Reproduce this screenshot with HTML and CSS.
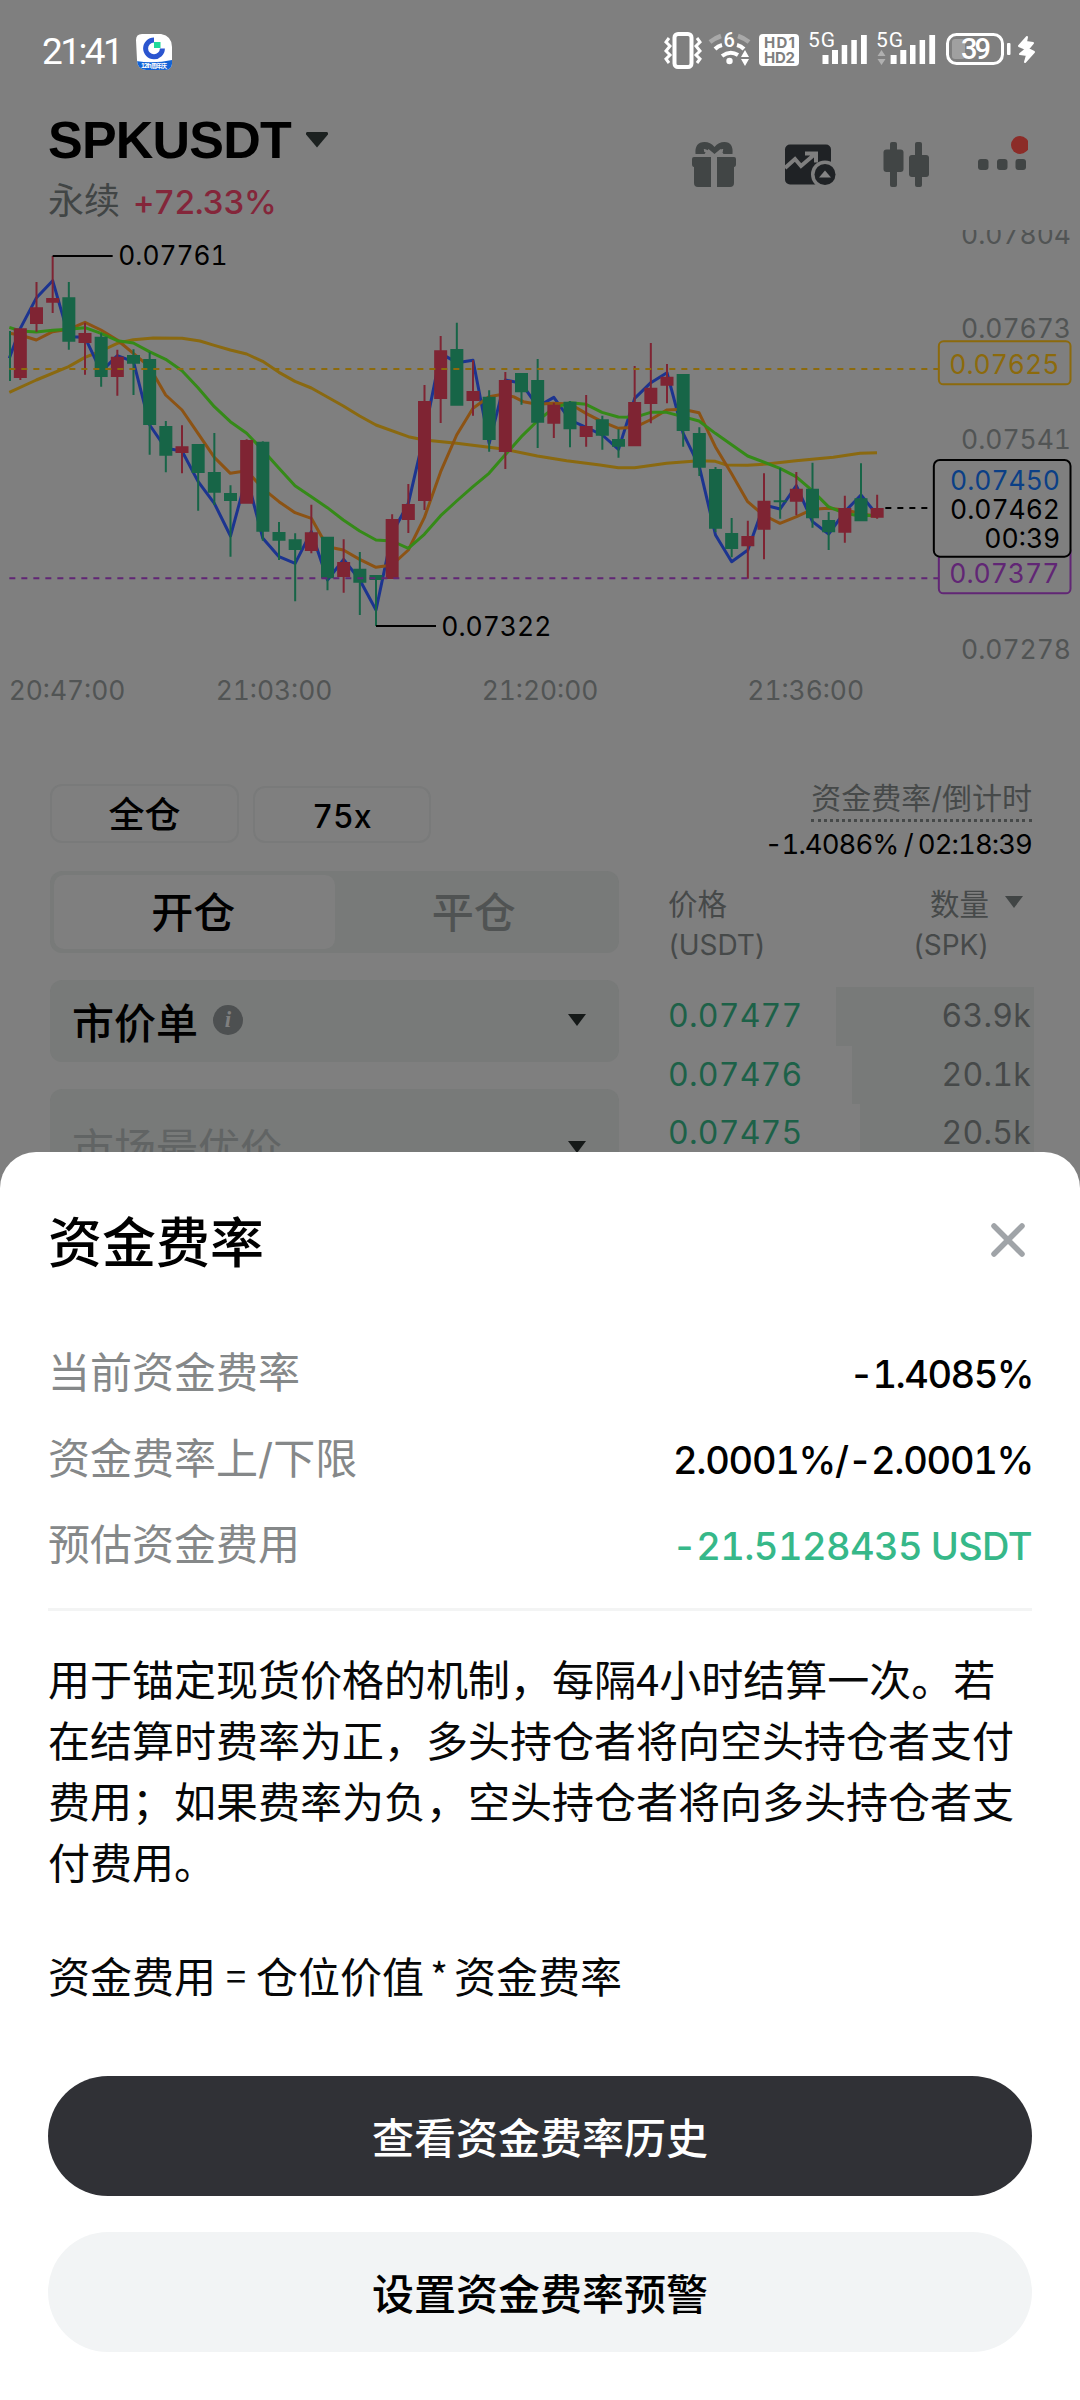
FILE: index.html
```html
<!DOCTYPE html>
<html lang="zh-CN">
<head>
<meta charset="utf-8">
<title>SPKUSDT 永续</title>
<link rel="stylesheet" href="styles.css">
</head>
<body>
<div class="screen">
  <header class="status">
    <span class="clock">21:41</span>
    <svg class="app-badge" width="36" height="37" viewBox="0 0 36 37">
      <defs><clipPath id="badge"><path d="M6 1H25Q36 3 36 14V31Q35 37 29 37H10Q1 36 1 27L0 7Q0 1 6 1Z"/></clipPath></defs>
      <g clip-path="url(#badge)"><rect width="36" height="37" fill="#fff"/><path d="M0 28Q18 31 36 27V37H0Z" fill="#1263d6"/></g>
      <path d="M18 7A8.4 8.4 0 1 0 26.400 15.500" fill="none" stroke="#2b55cf" stroke-width="5"/>
      <rect x="18" y="9" width="6.500" height="6" fill="#20d99a"/>
      <text x="5" y="34.500" font-size="6" font-weight="700" fill="#fff" textLength="26">12th 周年庆</text>
    </svg>
    <svg class="status-icons" width="376" height="44" viewBox="662 28 376 44" fill="#fff">
      <rect x="674.500" y="34" width="17" height="33" rx="3.500" fill="none" stroke="#fff" stroke-width="4"/>
      <path d="M669 38l-3 4 4 4-4 5 4 4-4 4 3 4M697 38l3 4-4 4 4 5-4 4 4 4-3 4" fill="none" stroke="#fff" stroke-width="3"/>
      <path d="M710 42Q715 38 721 36M738 36Q744 38 749 42" fill="none" stroke="#a9a9a9" stroke-width="4.500"/>
      <path d="M715 49Q718 46 722 45M737 45Q741 46 744 49M722 56Q730 50 738 55" fill="none" stroke="#fff" stroke-width="4"/>
      <circle cx="729.500" cy="61" r="3.200"/>
      <path d="M741 57l4-7 4 7zM741 59h8l-4 7z"/>
      <text class="wifi-gen" x="723.500" y="46.500">6</text>
      <rect x="759" y="34" width="40" height="32" rx="4"/>
      <text class="hd" x="764" y="48" textLength="31">HD1</text>
      <text class="hd" x="764" y="62.500" textLength="31">HD2</text>
      <text class="net" x="808" y="47" textLength="27">5G</text>
      <text class="net" x="876" y="47" textLength="27">5G</text>
      <path d="M822.500 55h6v9h-6zM832 50h6v14h-6zM841.700 45h5.500v19h-5.500zM851.300 40h5.500v24h-5.500zM861 35h5.800v29h-5.800zM890.600 55h6v9h-6zM900.300 50h6v14h-6zM910 45h5.500v19h-5.500zM919.600 40h5.500v24h-5.500zM929.300 35h5.800v29h-5.800z"/>
      <path d="M877.500 56l4-6 4 6zM877.500 59h8l-4 6z" fill="#b0b0b0"/>
      <rect x="952" y="39" width="13" height="20" rx="3" fill="#a0a0a0"/>
      <rect x="947.500" y="34.500" width="55" height="29" rx="9" fill="none" stroke="#fff" stroke-width="3"/>
      <rect x="1007" y="43" width="3.500" height="12" rx="1"/>
      <text class="charge" x="961" y="59" textLength="30">39</text>
      <path d="M1027 37L1019 46l7 3-6 5 7 1-2 7 9-10-6-3 5-6-7-1z" stroke="#fff" stroke-width="2" stroke-linejoin="round"/>
    </svg>
  </header>

  <section class="market">
    <div class="pair">
      <div class="pair-name"><h1>SPKUSDT</h1><svg width="22" height="16" viewBox="0 0 22 16"><path d="M1 0H21Q23 1 21.500 3L11 15.500.500 3Q-1 1 1 0Z" fill="#1c2120"/></svg></div>
      <div class="pair-sub"><span class="kind">永续</span><span class="change">+72.33%</span></div>
    </div>
    <nav class="tools">
      <svg width="338" height="54" viewBox="690 135 338 54" fill="#414545">
        <path d="M694 157h17v30h-13q-4 0-4-4v-16q-2 0-2-3v-5q0-2 2-2zM717 157h17q2 0 2 2v5q0 3-2 3v16q0 4-4 4h-13z"/>
        <path d="M695.500 154q-1-12 9-12q6 0 10 5q4-5 10-5q9 0 8 12h-9l-3-5-6 5-6-5-4 5z"/>
        <path d="M704 150.500q3-.5 5 5M723 150.500q-3-.5-5 5" fill="none" stroke="#7f7f7f" stroke-width="3"/>
        <rect x="785" y="144.500" width="46" height="40" rx="5" fill="#1f2225"/>
        <path d="M785 168l10-9 6 7 14-12M805 153.500h11v9" fill="none" stroke="#7f7f7f" stroke-width="4"/>
        <circle cx="825" cy="174.500" r="14" fill="#7f7f7f"/><circle cx="825" cy="174.500" r="10.500" fill="#1f2225"/>
        <path d="M819 177.500l6-7 6 7z" fill="#858585"/>
        <rect x="883.500" y="149.500" width="20" height="22.500" rx="3"/><rect x="890" y="142" width="7" height="45" rx="2"/>
        <rect x="909" y="155" width="20" height="22" rx="3"/><rect x="915" y="142" width="7" height="45" rx="2"/>
        <rect x="978" y="159" width="10.500" height="11" rx="3"/><rect x="997" y="159" width="10.500" height="11" rx="3"/><rect x="1015.500" y="159" width="10.500" height="11" rx="3"/>
        <circle cx="1020" cy="145" r="9" fill="#8c2c28"/>
      </svg>
    </nav>
  </section>

  <!-- Chart units are thirds of a CSS pixel -->
  <svg class="chart" width="1080" height="480" viewBox="0 30 3240 1440">
    <g id="averages"></g>
    <g id="candles"></g>
    <path d="M28 447H2815" class="dash" stroke="#8c6a0c"/>
    <path d="M28 1075H2815" class="dash" stroke="#612675"/>
    <path d="M2656 864H2785" class="dash" stroke="#000"/>
    <path d="M158 108H338M1128 1218H1308" stroke="#000" stroke-width="6"/>
    <text x="355" y="135" textLength="328" lengthAdjust="spacingAndGlyphs">0.07761</text>
    <text x="1324" y="1247" textLength="330" lengthAdjust="spacingAndGlyphs">0.07322</text>
    <g class="axis">
      <text x="2883" y="72" textLength="330" lengthAdjust="spacingAndGlyphs">0.07804</text>
      <text x="2883" y="354" textLength="330" lengthAdjust="spacingAndGlyphs">0.07673</text>
      <text x="2883" y="687" textLength="330" lengthAdjust="spacingAndGlyphs">0.07541</text>
      <text x="2883" y="1318" textLength="330" lengthAdjust="spacingAndGlyphs">0.07278</text>
      <text x="26" y="1440" textLength="350" lengthAdjust="spacingAndGlyphs">20:47:00</text>
      <text x="647" y="1440" textLength="350" lengthAdjust="spacingAndGlyphs">21:03:00</text>
      <text x="1445" y="1440" textLength="350" lengthAdjust="spacingAndGlyphs">21:20:00</text>
      <text x="2242" y="1440" textLength="350" lengthAdjust="spacingAndGlyphs">21:36:00</text>
    </g>
    <g fill="#7f7f7f" stroke-width="6">
      <rect x="2816.500" y="364" width="395" height="129" rx="14" stroke="#8c6a0c"/>
      <rect x="2816.500" y="980" width="395" height="140" rx="14" stroke="#612675"/>
      <rect x="2801.500" y="720" width="410" height="290" rx="18" stroke="#000"/>
    </g>
    <text x="2848" y="462" textLength="330" lengthAdjust="spacingAndGlyphs" fill="#8c6a0c">0.07625</text>
    <text x="2848" y="1089" textLength="330" lengthAdjust="spacingAndGlyphs" fill="#612675">0.07377</text>
    <text x="2850" y="810" textLength="330" lengthAdjust="spacingAndGlyphs" fill="#0b3f86">0.07450</text>
    <text x="2850" y="897" textLength="330" lengthAdjust="spacingAndGlyphs">0.07462</text>
    <text x="2953" y="984" textLength="228" lengthAdjust="spacingAndGlyphs">00:39</text>
  </svg>

  <section class="trade">
    <div class="form">
      <div class="chips"><span class="chip cross">全仓</span><span class="chip lever">75x</span></div>
      <div class="segment"><span class="seg active">开仓</span><span class="seg">平仓</span></div>
      <div class="field"><span>市价单</span><i class="info">i</i><b class="caret"></b></div>
      <div class="field price"><span>市场最优价</span><b class="caret"></b></div>
    </div>
    <div class="book">
      <div class="funding">资金费率/倒计时</div>
      <div class="countdown">-1.4086% / 02:18:39</div>
      <div class="book-head"><div>价格<br><small>(USDT)</small></div><div class="qty-head"><div>数量<br><small>(SPK)</small></div><b class="caret wide"></b></div></div>
      <div class="level"><span>0.07477</span><em style="width:198px">63.9k</em></div>
      <div class="level"><span>0.07476</span><em style="width:182px">20.1k</em></div>
      <div class="level"><span>0.07475</span><em style="width:174px">20.5k</em></div>
    </div>
  </section>

  <section class="sheet">
    <div class="sheet-head"><h2>资金费率</h2>
      <svg width="34" height="34" viewBox="0 0 34 34"><path d="M3 3L31 31M31 3L3 31" stroke="#a0a4a8" stroke-width="5.500" stroke-linecap="round"/></svg>
    </div>
    <dl class="rates">
      <div><dt>当前资金费率</dt><dd>-1.4085%</dd></div>
      <div><dt>资金费率上/下限</dt><dd class="limit">2.0001%/-2.0001%</dd></div>
      <div><dt>预估资金费用</dt><dd class="fee">-21.5128435 USDT</dd></div>
    </dl>
    <p class="explain">用于锚定现货价格的机制，每隔4小时结算一次。若在结算时费率为正，多头持仓者将向空头持仓者支付费用；如果费率为负，空头持仓者将向多头持仓者支付费用。</p>
    <p class="formula">资金费用<span class="eq">=</span>仓位价值<span class="mul">*</span>资金费率</p>
    <button class="btn dark">查看资金费率历史</button>
    <button class="btn light">设置资金费率预警</button>
  </section>
</div>
<script src="chart.js"></script>
</body>
</html>
```
FILE: styles.css
```css
* { box-sizing: border-box; margin: 0; padding: 0; }
body { background: #7f7f7f; }
.screen {
  width: 1080px; height: 2400px; overflow: hidden; background: #7f7f7f;
  display: flex; flex-direction: column;
  font-family: Inter, "Noto Sans CJK SC", sans-serif;
  font-variant-numeric: tabular-nums; color: #000;
}
.status { height: 100px; display: flex; align-items: flex-start; padding: 29px 42px 0 42px; color: #fff; }
.clock { font: 400 37px/46px Roboto, sans-serif; width: 94px; letter-spacing: -2.6px; white-space: nowrap; }
.app-badge { margin-top: 4px; }
.status-icons { margin: -1px 0 0 auto; }
.wifi-gen { font: 500 20px Roboto, sans-serif; }
.hd { font: 700 15px Inter, sans-serif; fill: #7f7f7f; }
.net { font: 400 21px Roboto, sans-serif; }
.charge { font: 500 29px Roboto, sans-serif; }

.market { height: 130px; display: flex; justify-content: space-between; align-items: flex-start; padding: 0 52px 0 48px; }
.pair-name { display: flex; align-items: center; gap: 15px; height: 80px; }
h1 { font: 700 52px/80px "Liberation Sans", sans-serif; letter-spacing: -0.8px; }
.pair-sub { display: flex; gap: 13px; line-height: 42px; align-items: baseline; }
.kind { font-size: 36px; color: #414545; }
.change { font-size: 33px; font-weight: 500; color: #84263a; letter-spacing: -0.8px; }
.tools { padding-top: 35px; }
.tools svg, .chart { display: block; }
.chart { flex: none; }
.chart text { font-family: Inter, sans-serif; font-size: 79px; }
.axis { fill: #515454; }
.dash { stroke-width: 6; stroke-dasharray: 18 18; }

.trade { flex: none; height: 442px; padding: 74px 48px 0 50px; display: flex; justify-content: space-between; overflow: hidden; }
.form { width: 569px; }
.chips { display: flex; gap: 14px; height: 59px; }
.chip { border: 2px solid #797a7a; border-radius: 12px; display: flex; align-items: center; justify-content: center; font-weight: 500; }
.cross { width: 189px; font-size: 36px; padding-bottom: 3px; }
.lever { width: 178px; font-size: 32px; margin-top: 2px; padding-top: 3px; }
.segment { margin-top: 28px; height: 82px; padding: 4px; background: #787a79; border-radius: 12px; display: flex; }
.seg { flex: 1; display: flex; align-items: center; justify-content: center; font-size: 42px; font-weight: 500; border-radius: 10px; color: #505353; padding: 0 2px 5px 0; }
.seg.active { background: #7f7f7f; color: #000; }
.field { margin-top: 27px; height: 82px; padding: 0 33px 2px 22px; background: #787a79; border-radius: 12px; display: flex; align-items: center; font-size: 42px; font-weight: 500; }
.field.price { height: 118px; color: #616464; font-weight: 400; }
.field.price span { margin-top: -4px; }
.info { width: 30px; height: 30px; margin-left: 15px; border-radius: 50%; background: #4d5051; color: #7f7f7f; font: italic 700 23px/29px "Liberation Serif", serif; text-align: center; }
.caret { margin-left: auto; width: 18px; height: 12px; background: #151918; clip-path: polygon(0 0, 100% 0, 50% 100%); }

.book { width: 364px; color: #464949; text-align: right; }
.funding { display: inline-block; height: 38px; font-size: 30px; line-height: 28px; border-bottom: 3px dotted #464949; white-space: nowrap; }
.countdown { color: #000; font-size: 27.500px; line-height: 36px; margin-top: 4px; white-space: nowrap; letter-spacing: -0.95px; word-spacing: -1.200px; }
.book-head { display: flex; justify-content: space-between; font-size: 29.500px; line-height: 40px; margin-top: 22px; text-align: left; height: 103px; }
.book-head small { font-size: 28px; letter-spacing: -0.1px; }
.qty-head { display: flex; gap: 16px; text-align: right; padding-right: 9px; }
.caret.wide { margin-top: 12px; background: #414545; }
.level { display: flex; justify-content: space-between; font-size: 32px; line-height: 58px; height: 58.600px; margin-right: -2px; }
.level span { color: #1d6148; letter-spacing: 0.2px; }
.level em { font-style: normal; background: #787a79; padding-right: 3px; letter-spacing: 0.2px; }

.sheet { flex: none; height: 1248px; background: #fff; border-radius: 36px 36px 0 0; padding: 0 48px; }
.sheet-head { height: 176px; display: flex; align-items: center; justify-content: space-between; padding-right: 7px; }
h2 { font-size: 54px; font-weight: 500; margin-top: -2px; }
.rates { height: 283px; border-bottom: 3px solid #f3f4f4; }
.rates div { height: 86px; display: flex; justify-content: space-between; align-items: center; }
.rates dt { font-size: 42px; color: #858889; margin-top: -4px; }
.rates dd { font-size: 38px; font-weight: 500; margin: 6px -1px 0 0; letter-spacing: -1.500px; }
.rates .limit { letter-spacing: -1.300px; }
.rates .fee { color: #36b889; letter-spacing: -0.6px; word-spacing: -1px; margin-right: 0; }
.explain { margin-top: 36px; font: 400 42px/61px "Noto Sans CJK SC", sans-serif; color: #070808; }
.formula { margin-top: 53px; font: 400 42px/61px "Noto Sans CJK SC", sans-serif; color: #070808; display: flex; }
.eq { width: 40px; font-size: 36px; text-align: center; }
.mul { width: 30px; font-size: 38px; text-align: center; }
.btn { display: block; width: 984px; height: 120px; border: 0; border-radius: 60px; font: 500 42px/120px "Noto Sans CJK SC", sans-serif; }
.dark { margin-top: 71px; background: #303136; color: #fff; }
.light { margin-top: 36px; background: #f2f4f5; color: #000; }
```
FILE: chart.js
```js
// [direction, high, body top, body bottom, low]
const candles = [
  ['r',325,325,474,480],['r',186,262,312,335],['r',108,234,248,279],['g',186,232,365,389],
  ['r',308,339,369,464],['g',340,350,471,500],['r',389,410,471,527],['g',388,405,431,525],
  ['g',397,417,615,704],['g',603,618,707,757],['r',616,679,699,760],['g',672,672,759,872],
  ['g',639,756,818,855],['g',796,819,843,1010],['r',658,660,851,851],['g',664,665,935,962],
  ['g',906,936,962,1020],['g',940,958,990,1144],['r',854,937,993,1000],['g',950,950,1075,1111],
  ['r',958,1026,1071,1118],['g',996,1046,1088,1185],['g',1065,1065,1080,1218],['r',883,897,1077,1077],
  ['r',792,852,900,939],['r',495,543,843,870],['r',348,391,537,609],['g',308,387,557,557],
  ['r',421,513,543,587],['g',511,530,660,695],['r',456,480,696,747],['g',459,459,517,554],
  ['g',417,480,608,684],['r',548,554,611,654],['g',543,545,628,682],['r',525,618,651,680],
  ['g',587,598,647,689],['g',628,657,680,713],['r',438,546,679,679],['r',369,503,552,610],
  ['r',432,470,497,550],['g',462,462,633,680],['g',622,639,743,768],['g',741,747,926,936],
  ['g',894,939,987,1012],['r',902,948,979,1076],['r',760,842,929,1018],['g',745,841,847,896],
  ['r',756,806,845,886],['g',728,806,895,923],['g',876,900,937,990],['r',827,864,938,968],
  ['g',730,835,904,904],['r',824,864,893,896]
];
const x = i => 61 + 48.5 * i;
const fast = [325,233,182,350,352,455,407,425,615,685,693,785,850,948,770,955,1010,1030,935,1080,1018,1080,1170,940,850,640,400,428,421,670,480,490,560,532,600,622,645,688,535,488,458,640,740,945,1025,990,855,867,797,905,942,875,825,885];
const lines = [
  ['#8a6910', '28,517 109,480 206,440 255,412 303,393 352,370 400,359 460,354 546,355 600,363 643,376 691,390 740,402 788,424 837,457 885,484 934,504 1030,558 1079,588 1128,615 1225,650 1273,660 1370,670 1515,688 1612,708 1700,722 1800,735 1855,743 1904,743 2000,730 2097,722 2146,724 2180,735 2243,736 2300,732 2388,722 2500,712 2580,700 2631,698'],
  ['#1c3490', '28,415 ' + fast.map((y, i) => x(i) + ',' + y).join(' ')],
  ['#8c5314', '28,340 61,345 109,360 158,335 206,328 255,307 303,330 352,360 400,400 448,440 497,525 546,570 594,640 643,712 691,760 740,752 788,805 837,845 885,878 934,895 982,980 1030,990 1079,1018 1128,1042 1176,1035 1225,990 1273,893 1322,755 1370,645 1419,565 1467,530 1500,524 1540,530 1570,545 1612,553 1660,550 1710,552 1758,580 1806,605 1855,625 1904,622 1950,600 2000,570 2048,568 2097,578 2146,680 2194,760 2243,845 2290,885 2340,910 2390,890 2437,868 2485,865 2534,870 2631,890'],
  ['#358a18', '28,322 61,333 109,336 158,331 206,328 255,323 303,340 352,362 400,369 448,395 497,418 546,452 594,503 643,560 691,605 740,640 788,690 837,745 885,797 934,830 982,863 1030,900 1079,933 1128,960 1176,963 1225,985 1273,943 1322,887 1370,843 1419,800 1467,760 1515,705 1564,650 1612,603 1660,565 1710,548 1758,553 1806,577 1855,591 1904,592 1952,577 2000,577 2048,590 2097,603 2146,640 2243,708 2340,745 2388,770 2437,812 2485,860 2534,880 2580,888 2631,885']
];
document.getElementById('averages').innerHTML = lines.map(([color, points]) =>
  `<polyline points="${points}" fill="none" stroke="${color}" stroke-width="9" stroke-linejoin="round"/>`).join('');
const fill = { r: '#7f2433', g: '#176547' };
document.getElementById('candles').innerHTML =
  `<rect x="27" y="333" width="6" height="150" fill="${fill.g}"/>` +
  candles.map(([d, high, top, bottom, low], i) =>
    `<path d="M${x(i) - 3} ${high}h6V${low}h-6zM${x(i) - 19.5} ${top}h39V${bottom}h-39z" fill="${fill[d]}"/>`).join('');
```
